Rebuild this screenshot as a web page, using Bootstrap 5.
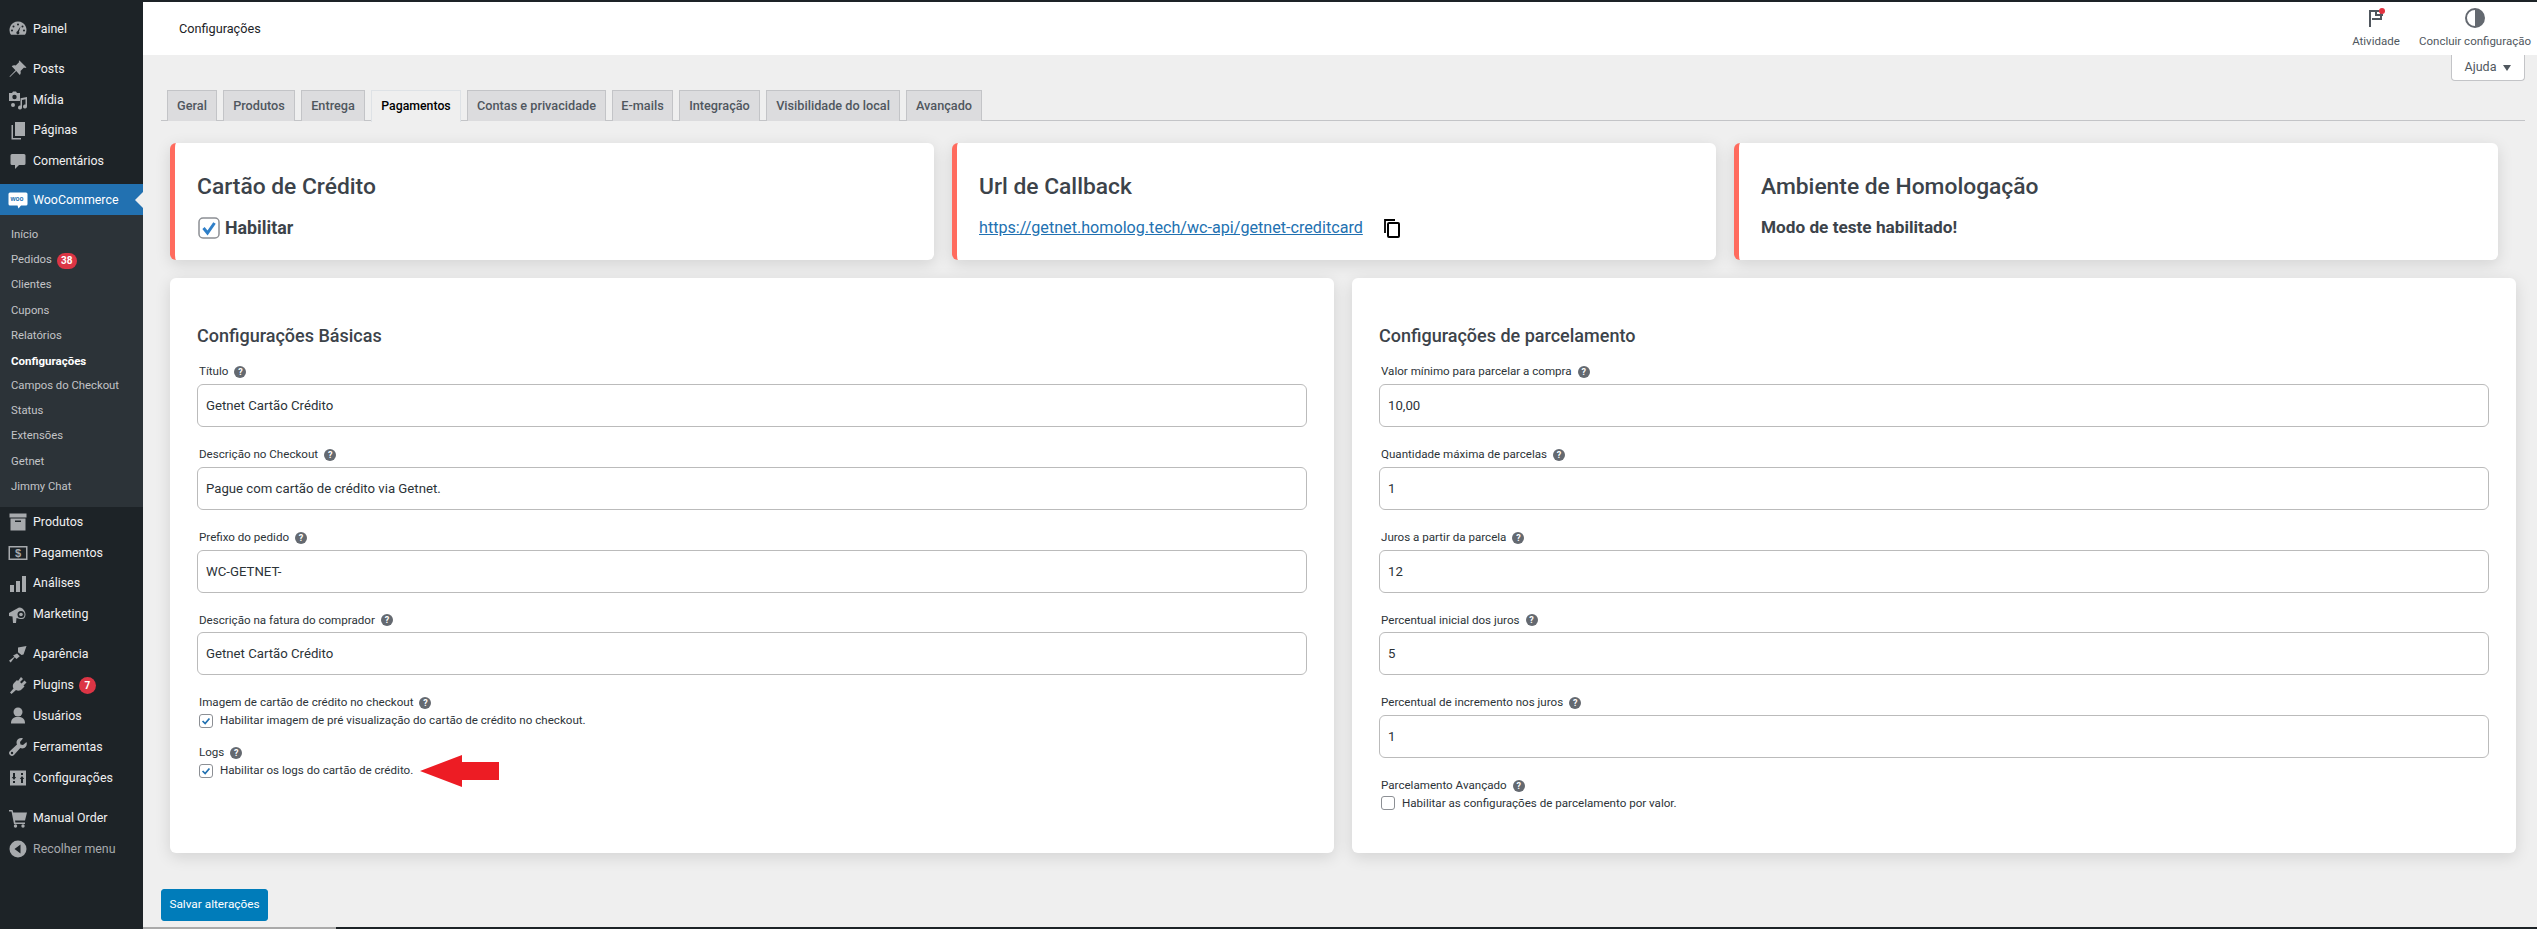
<!DOCTYPE html>
<html lang="pt-BR">
<head>
<meta charset="utf-8">
<title>Configurações</title>
<link href="https://cdn.jsdelivr.net/npm/bootstrap@5.3.0/dist/css/bootstrap.min.css" rel="stylesheet">
<style>
html,body{height:929px;overflow:hidden;}
body{font-family:Roboto,"Noto Sans",sans-serif;background:#efefef;color:#2c3338;font-size:12px;}
.shell{height:929px;}
.wp-side{width:143px;flex:none;background:#1d2327;padding-top:13.5px;}
.wp-item{height:30.8px;color:#f0f0f1;font-size:12.400px;padding-left:8px;position:relative;text-decoration:none;}
.wp-item svg{width:20px;height:20px;fill:#a7aaad;flex:none;margin-right:5px;}
.wp-gap{height:9.4px;}
.wp-active{background:#2271b1;color:#fff;height:31px;}
.wp-active::after{content:"";position:absolute;right:0;top:8px;border:8px solid transparent;border-left:0;border-right-color:#efefef;}
.wp-sub{background:#2c3338;color:#c3c4c7;padding:7.4px 0 6.8px 11px;}
.wp-sub .sub-link{display:flex;align-items:center;height:25.2px;color:#c3c4c7;font-size:11.300px;text-decoration:none;}
.wp-sub .sub-link.on{color:#fff;font-weight:700;font-size:11.500px;}
.wp-badge{font-size:10px;padding:0;width:20px;height:16px;line-height:16px;margin-left:5px;}
.wp-badge-one{width:17px;height:17px;line-height:17px;margin-left:5px;font-size:10px;padding:0;}
.wp-muted{color:#a7aaad;}
.wp-main{min-width:0;}
.top-strip{height:2px;background:#1d2327;flex:none;}
.wc-head{height:53px;background:#fff;flex:none;padding-left:36px;font-size:12.700px;color:#1d2327;}
.wc-act{width:82px;font-size:11.500px;color:#50575e;text-align:center;white-space:nowrap;}
.wc-act svg{width:22px;height:22px;display:block;margin:0 auto 4px;}
.wc-acts{padding-right:4px;gap:0;}
.help-row{height:26px;padding-right:12px;flex:none;}
.help-tab{width:74px;height:26px;background:#fff;border:1px solid #c3c4c7;border-top:0;border-radius:0 0 4px 4px;font-size:12.500px;color:#50575e;}
.help-tab i{border:4.5px solid transparent;border-top:6px solid #50575e;border-bottom:0;margin-left:7px;display:block;}
.tab-wrap{margin:9px 12px 0 18px;border-bottom:1px solid #c3c4c7;padding-left:6px;gap:6px;height:31px;flex:none;}
.tab-wrap .nav-link{height:31px;margin:0;padding:0;background:#dcdcde;border:1px solid #c3c4c7;border-bottom:0;border-radius:0;color:#50575e;font-size:12.700px;font-weight:500;display:flex;align-items:center;justify-content:center;}
.tab-wrap .nav-link.active{background:#efefef;color:#000;font-weight:500;font-size:12.300px;height:32px;}
.w-geral{width:50px}.w-prod{width:72px}.w-ent{width:64px}.w-pag{width:90px}.w-ema{width:61px}.w-int{width:81px}.w-vis{width:134px}.w-ava{width:76px}
.tab-wrap .w-con{width:139px}
.cards-top{margin:22px 0 0 27px;gap:18px;flex:none;}
.cards-top .card{width:764px;height:117px;border:0;border-left:5px solid #ff6b5e;border-radius:6px;box-shadow:0 4px 16px rgba(0,0,0,.12);padding:30px 0 0 22px;}
.cards-top h3{font-size:22.800px;line-height:27px;font-weight:500;color:#3c434a;margin:0 0 15px;}
.line-row{height:26px;font-size:17.800px;font-weight:700;color:#3c434a;}
.big-check{width:22px;height:22px;margin:0 5px 0 1px;flex:none;}
.line-row a{font-size:16.150px;font-weight:400;color:#2271b1;}
.copy-ic{width:22px;height:22px;margin-left:18px;}
.line-row .note{font-size:17.200px;}
.cards-main{margin:18px 0 0 27px;gap:18px;flex:none;}
.cards-main .card{width:1164px;height:575px;border:0;border-radius:6px;box-shadow:0 4px 16px rgba(0,0,0,.12);padding:46px 27px 0;}
.cards-main h4{font-size:18px;line-height:24px;font-weight:500;color:#3c434a;margin:0 0 15px;}
.fgroup{margin-bottom:18.75px;}
.fgroup label,.flabel{display:flex;align-items:center;height:18px;margin:0 0 3px 2px;font-size:11.600px;color:#2c3338;}
.hlp{width:12px;height:12px;border-radius:50%;background:#646970;color:#fff;font-size:9px;font-weight:700;line-height:12px;text-align:center;margin-left:6px;flex:none;}
.fgroup .form-control{height:43px;border:1px solid #bbb;border-radius:6px;padding:0 8px;font-size:13.200px;color:#2c3338;box-shadow:none;}
.chk-block .flabel{margin-bottom:0;}
.chk-block{margin-bottom:15px;}
.chk-row{height:17px;margin-left:2px;font-size:11.600px;color:#2c3338;}
.chk-row .form-check-input{width:14px;height:14px;margin:0 7px 0 0;flex:none;border:1px solid #8c8f94;border-radius:3px;box-shadow:none;}
.chk-row .form-check-input:checked{background-color:#fff;border-color:#8c8f94;background-image:url("data:image/svg+xml,%3Csvg xmlns='http://www.w3.org/2000/svg' viewBox='0 0 14 14'%3E%3Cpath d='M3 7l3 3 5-6' fill='none' stroke='%232271b1' stroke-width='2'/%3E%3C/svg%3E");}
.arrow-ic{width:79px;height:32px;margin-left:7px;fill:#ed1c24;flex:none;}
.save-btn{margin:36px 0 0 18px;width:107px;height:32px;padding:0;background:#007cba;border-color:#007cba;border-radius:3px;font-size:11.800px;flex:none;}
.bottom-strip{margin-top:auto;height:2px;flex:none;}
.bottom-strip span:first-child{width:193px;background:#aaa;}
.bottom-strip span:last-child{flex:1;background:#1d2327;}
.woo-txt{font:700 6.5px "Liberation Sans",sans-serif;fill:#2271b1;}
.pay-txt{font:700 11px "Liberation Sans",sans-serif;fill:#a7aaad;}
</style>
</head>
<body>
<div class="shell d-flex">
  <nav class="wp-side d-flex flex-column">
    <a class="wp-item d-flex align-items-center"><svg viewBox="0 0 20 20"><path fill-rule="evenodd" d="M10 2.500a8.500 8.500 0 0 0-7 13.300h14A8.500 8.500 0 0 0 10 2.500zM10 4.500a1 1 0 1 1 0 2 1 1 0 0 1 0-2zM5.500 6.500a1 1 0 1 1 0 2 1 1 0 0 1 0-2zM14.500 6.500a1 1 0 1 1 0 2 1 1 0 0 1 0-2zM4 10.500a1 1 0 1 1 0 2 1 1 0 0 1 0-2zM16 10.500a1 1 0 1 1 0 2 1 1 0 0 1 0-2zM12.500 7.500l-1.500 5.200a1.500 1.500 0 1 1-1.600-.4z"/></svg>Painel</a>
    <div class="wp-gap"></div>
    <a class="wp-item d-flex align-items-center"><svg viewBox="0 0 20 20"><path d="M11.500 1.500l7 7-1.500.6-1-.6-3.500 3.500c.5 1.500.2 3-.7 4L8.200 12 2 18l-.5-.5 6-6.300-3.800-3.900c1-1 2.500-1.200 4-.7L11.200 3l-.5-.900z"/></svg>Posts</a>
    <a class="wp-item d-flex align-items-center"><svg viewBox="0 0 20 20"><path fill-rule="evenodd" d="M1 3h3l1-1.500h3L9 3h3v8H1zM6.500 4.800a2.200 2.200 0 1 0 0 4.400 2.200 2.200 0 0 0 0-4.400zM19 7v9.500a2 2 0 1 1-1.500-1.900V9.300l-3.500.7v7.500a2 2 0 1 1-1.500-1.900V8.300zM5 13a2 2 0 1 1 0 4 2 2 0 0 1 0-4z"/></svg>Mídia</a>
    <a class="wp-item d-flex align-items-center"><svg viewBox="0 0 20 20"><path d="M7 1h10v14H7z"/><path d="M5 4v13h8v1.500H3.500V4z"/></svg>Páginas</a>
    <a class="wp-item d-flex align-items-center"><svg viewBox="0 0 20 20"><path d="M4 3h12a1.500 1.500 0 0 1 1.500 1.500v8A1.500 1.500 0 0 1 16 14h-5l-4 4v-4H4a1.500 1.500 0 0 1-1.500-1.500v-8A1.500 1.500 0 0 1 4 3z"/></svg>Comentários</a>
    <div style="height:7.6px"></div>
    <a class="wp-item wp-active d-flex align-items-center"><svg viewBox="0 0 20 20"><path style="fill:#fff" d="M2 2.500h16a1.500 1.500 0 0 1 1.500 1.500v10a1.500 1.500 0 0 1-1.500 1.500h-5l-2.500 3-1-3H2A1.500 1.500 0 0 1 .5 14V4A1.500 1.500 0 0 1 2 2.500z"/><text class="woo-txt" x="2.500" y="11">woo</text></svg>WooCommerce</a>
    <div class="wp-sub">
      <a class="sub-link">Início</a>
      <a class="sub-link">Pedidos<span class="badge rounded-pill bg-danger wp-badge">38</span></a>
      <a class="sub-link">Clientes</a>
      <a class="sub-link">Cupons</a>
      <a class="sub-link">Relatórios</a>
      <a class="sub-link on">Configurações</a>
      <a class="sub-link">Campos do Checkout</a>
      <a class="sub-link">Status</a>
      <a class="sub-link">Extensões</a>
      <a class="sub-link">Getnet</a>
      <a class="sub-link">Jimmy Chat</a>
    </div>
    <a class="wp-item d-flex align-items-center"><svg viewBox="0 0 20 20"><path fill-rule="evenodd" d="M1.500 1.500h17v4h-17zM2.500 6.500h15v12h-15zM7 8.500v1.500h6V8.500z"/></svg>Produtos</a>
    <a class="wp-item d-flex align-items-center"><svg viewBox="0 0 20 20"><path fill-rule="evenodd" d="M.5 3h19v14H.5zM2 4.500v11h16v-11z"/><text class="pay-txt" x="6.900" y="14">$</text></svg>Pagamentos</a>
    <a class="wp-item d-flex align-items-center"><svg viewBox="0 0 20 20"><path d="M2 11h4v7H2zM8 7h4v11H8zM14 2h4v16h-4z"/></svg>Análises</a>
    <a class="wp-item d-flex align-items-center"><svg viewBox="0 0 20 20"><path fill-rule="evenodd" d="M1 8l10-5.500 2 .3c2.500 1 4.500 3.800 4.500 6.700 0 2.500-1.500 4.500-3.500 4.500H12L8.500 13l-.5 5H5l-.5-6.500-3.500-.5zM13 6a3.500 3.500 0 1 0 0 7 3.500 3.500 0 0 0 0-7z"/><circle cx="13" cy="9.500" r="1.800"/></svg>Marketing</a>
    <div class="wp-gap"></div>
    <a class="wp-item d-flex align-items-center"><svg viewBox="0 0 20 20"><path d="M10 2.500l8.500-1.500-3 8.500-2 .5L10 7.300zM9 8.500l2.800 2.800-3.300 2.700-1.800-1.800-4 5.300-1.700-1.700 5.300-4-1.200-1.300z"/></svg>Aparência</a>
    <a class="wp-item d-flex align-items-center"><svg viewBox="0 0 20 20"><path d="M13 2l2 2-3 3 1.500 1.500 3-3 2 2-3 3 1 1-3 3c-1.500 1.500-4 1.500-5.500.5L3.500 19 2 17.500l3.500-4C4.500 12 4.500 9.500 6 8l3-3 1 1z"/></svg>Plugins<span class="badge rounded-pill bg-danger wp-badge-one">7</span></a>
    <a class="wp-item d-flex align-items-center"><svg viewBox="0 0 20 20"><circle cx="10" cy="6" r="4.500"/><path d="M3 17.500c0-4 2-6 5-6.500h4c3 .5 5 2.500 5 6.500z"/></svg>Usuários</a>
    <a class="wp-item d-flex align-items-center"><svg viewBox="0 0 20 20"><path fill-rule="evenodd" d="M18.500 5l-3.500 3-2.500-.5L12 5l3-3.500c-2.500-1-5 0-6 2-.7 1.500-.5 3 0 4L2 14a2.600 2.600 0 0 0 4 4l6.300-7c1 .5 2.500.7 4 0 2-1 3.200-3.500 2.200-6zM4 14.800a1.200 1.200 0 1 1 0 2.400 1.200 1.200 0 0 1 0-2.400z"/></svg>Ferramentas</a>
    <a class="wp-item d-flex align-items-center"><svg viewBox="0 0 20 20"><path fill-rule="evenodd" d="M2 2.500h16v15H2zM5 5v4H3.800l2.200 3 2.200-3H7V5zM13 15v-4h-1.200l2.200-3 2.200 3H15v4zM7 13v2H5v-2zM15 5v2h-2V5z"/></svg>Configurações</a>
    <div class="wp-gap"></div>
    <a class="wp-item d-flex align-items-center"><svg viewBox="0 0 20 20"><path d="M1 2h3.500l.7 2.500H19l-2 8H7l.4 2H17V16H6L3.500 3.500H1z"/><circle cx="7.500" cy="18" r="1.700"/><circle cx="15" cy="18" r="1.700"/></svg>Manual Order</a>
    <a class="wp-item wp-muted d-flex align-items-center"><svg viewBox="0 0 20 20"><path fill-rule="evenodd" d="M10 1.500a8.500 8.500 0 1 1 0 17 8.500 8.500 0 0 1 0-17zM12.500 5.500L6.500 10l6 4.500z"/></svg>Recolher menu</a>
  </nav>

  <main class="wp-main flex-grow-1 d-flex flex-column">
    <div class="top-strip"></div>
    <header class="wc-head d-flex align-items-center justify-content-between">
      <span>Configurações</span>
      <div class="wc-acts d-flex">
        <div class="wc-act"><svg viewBox="0 0 22 22"><path d="M5 20V4h11v8H7" fill="none" stroke="#50575e" stroke-width="2"/><path d="M11 4v4h7" fill="none" stroke="#50575e" stroke-width="2"/><circle cx="17" cy="4" r="3" fill="#e2323f"/></svg>Atividade</div>
        <div class="wc-act" style="width:116px"><svg viewBox="0 0 22 22"><circle cx="11" cy="11" r="9" fill="#fff" stroke="#646970" stroke-width="2"/><path d="M11 2a9 9 0 0 1 0 18z" fill="#646970"/></svg>Concluir configuração</div>
      </div>
    </header>
    <div class="help-row d-flex justify-content-end">
      <div class="help-tab d-flex align-items-center justify-content-center">Ajuda<i></i></div>
    </div>
    <ul class="nav nav-tabs tab-wrap">
      <li class="nav-item"><a class="nav-link w-geral">Geral</a></li>
      <li class="nav-item"><a class="nav-link w-prod">Produtos</a></li>
      <li class="nav-item"><a class="nav-link w-ent">Entrega</a></li>
      <li class="nav-item"><a class="nav-link active w-pag">Pagamentos</a></li>
      <li class="nav-item"><a class="nav-link w-con">Contas e privacidade</a></li>
      <li class="nav-item"><a class="nav-link w-ema">E-mails</a></li>
      <li class="nav-item"><a class="nav-link w-int">Integração</a></li>
      <li class="nav-item"><a class="nav-link w-vis">Visibilidade do local</a></li>
      <li class="nav-item"><a class="nav-link w-ava">Avançado</a></li>
    </ul>

    <div class="cards-top d-flex">
      <section class="card">
        <h3>Cartão de Crédito</h3>
        <div class="line-row d-flex align-items-center">
          <svg class="big-check" viewBox="0 0 22 22"><rect x="1" y="1" width="20" height="20" rx="4" fill="#fff" stroke="#8c8f94" stroke-width="1.500"/><path d="M5.500 11l4 5 7-10" fill="none" stroke="#2f7fc8" stroke-width="3"/></svg>Habilitar
        </div>
      </section>
      <section class="card">
        <h3>Url de Callback</h3>
        <div class="line-row d-flex align-items-center">
          <a href="#">https://getnet.homolog.tech/wc-api/getnet-creditcard</a>
          <svg class="copy-ic" viewBox="0 0 22 22"><path d="M4 16V3h10" fill="none" stroke="#000" stroke-width="1.800"/><rect x="7" y="6" width="11" height="14" rx="1" fill="none" stroke="#000" stroke-width="2"/></svg>
        </div>
      </section>
      <section class="card">
        <h3>Ambiente de Homologação</h3>
        <div class="line-row d-flex align-items-center"><span class="note">Modo de teste habilitado!</span></div>
      </section>
    </div>

    <div class="cards-main d-flex">
      <section class="card">
        <h4>Configurações Básicas</h4>
        <div class="fgroup"><label>Título<span class="hlp">?</span></label><input class="form-control" value="Getnet Cartão Crédito"></div>
        <div class="fgroup"><label>Descrição no Checkout<span class="hlp">?</span></label><input class="form-control" value="Pague com cartão de crédito via Getnet."></div>
        <div class="fgroup"><label>Prefixo do pedido<span class="hlp">?</span></label><input class="form-control" value="WC-GETNET-"></div>
        <div class="fgroup"><label>Descrição na fatura do comprador<span class="hlp">?</span></label><input class="form-control" value="Getnet Cartão Crédito"></div>
        <div class="chk-block">
          <div class="flabel">Imagem de cartão de crédito no checkout<span class="hlp">?</span></div>
          <div class="chk-row d-flex align-items-center"><input class="form-check-input" type="checkbox" checked>Habilitar imagem de pré visualização do cartão de crédito no checkout.</div>
        </div>
        <div class="chk-block">
          <div class="flabel">Logs<span class="hlp">?</span></div>
          <div class="chk-row d-flex align-items-center"><input class="form-check-input" type="checkbox" checked>Habilitar os logs do cartão de crédito.<svg class="arrow-ic" viewBox="0 0 79 32"><path d="M0 16L42 0v7h37v18H42v7z"/></svg></div>
        </div>
      </section>
      <section class="card">
        <h4>Configurações de parcelamento</h4>
        <div class="fgroup"><label>Valor mínimo para parcelar a compra<span class="hlp">?</span></label><input class="form-control" value="10,00"></div>
        <div class="fgroup"><label>Quantidade máxima de parcelas<span class="hlp">?</span></label><input class="form-control" value="1"></div>
        <div class="fgroup"><label>Juros a partir da parcela<span class="hlp">?</span></label><input class="form-control" value="12"></div>
        <div class="fgroup"><label>Percentual inicial dos juros<span class="hlp">?</span></label><input class="form-control" value="5"></div>
        <div class="fgroup"><label>Percentual de incremento nos juros<span class="hlp">?</span></label><input class="form-control" value="1"></div>
        <div class="chk-block">
          <div class="flabel">Parcelamento Avançado<span class="hlp">?</span></div>
          <div class="chk-row d-flex align-items-center"><input class="form-check-input" type="checkbox">Habilitar as configurações de parcelamento por valor.</div>
        </div>
      </section>
    </div>

    <div><button class="btn btn-primary save-btn" type="button">Salvar alterações</button></div>
    <div class="bottom-strip d-flex"><span></span><span></span></div>
  </main>
</div>
<script src="https://cdn.jsdelivr.net/npm/bootstrap@5.3.0/dist/js/bootstrap.bundle.min.js"></script>
</body>
</html>
